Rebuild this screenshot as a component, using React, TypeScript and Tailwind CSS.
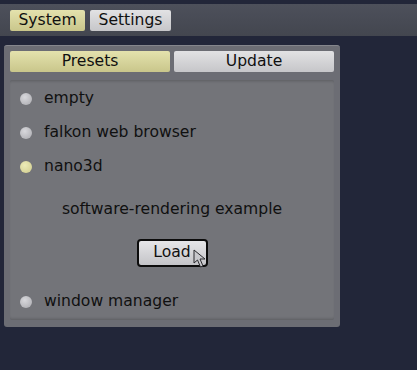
const font = "font-['DejaVu_Sans',sans-serif]";

const presets = ["empty", "falkon web browser", "nano3d"];

function Dot({ on }: { on?: boolean }) {
  return (
    <span
      className={`h-[12px] w-[12px] shrink-0 rounded-full ${
        on
          ? "bg-[radial-gradient(circle_at_40%_35%,#ecebb8,#cfcb8c)]"
          : "bg-[radial-gradient(circle_at_40%_35%,#d8d8dc,#a9a9ae)]"
      }`}
    />
  );
}

function Row({ label, on }: { label: string; on?: boolean }) {
  return (
    <div className="flex h-[34px] items-center gap-[12px] pl-[10px]">
      <Dot on={on} />
      <span className="text-[15.6px] leading-none text-[#101010]">{label}</span>
    </div>
  );
}

export default function App() {
  return (
    <div className={`h-[370px] w-[417px] bg-[#222639] pt-[4px] ${font}`}>
      {/* top bar */}
      <div className="flex h-[32px] gap-[5px] bg-gradient-to-b from-[#4d505b] to-[#43464f] px-[10px] pt-[6px]">
        <button className="h-[21px] w-[75px] rounded-[2px] bg-gradient-to-b from-[#e4e2ad] to-[#c9c68b] text-[15.6px] leading-none text-[#101010]">
          System
        </button>
        <button className="h-[21px] w-[81px] rounded-[2px] bg-gradient-to-b from-[#e2e2e4] to-[#c6c6c9] text-[15.6px] leading-none text-[#101010]">
          Settings
        </button>
      </div>

      {/* panel */}
      <div className="ml-[4px] mt-[9px] flex h-[282px] w-[336px] flex-col rounded-[3px] border-t border-[#85868c] bg-[#6c6d74] px-[6px] pt-[5px]">
        <div className="flex gap-[4px]">
          <button className="h-[21px] w-[160px] rounded-[2px] bg-gradient-to-b from-[#e4e2ad] to-[#c9c68b] text-[15.6px] leading-none text-[#101010]">
            Presets
          </button>
          <button className="h-[21px] w-[160px] rounded-[2px] bg-gradient-to-b from-[#e2e2e4] to-[#c6c6c9] text-[15.6px] leading-none text-[#101010]">
            Update
          </button>
        </div>

        <div className="relative mt-[8px] h-[240px] rounded-[2px] bg-[#737479] pt-[2px] shadow-[inset_0_3px_3px_-2px_rgba(0,0,0,0.2),inset_0_-3px_3px_-2px_rgba(0,0,0,0.2)]">
          {presets.map((p) => (
            <Row key={p} label={p} on={p === "nano3d"} />
          ))}
          <div className="mt-[16px] flex h-[20px] items-center justify-center text-[15.6px] text-[#101010]">
            software-rendering example
          </div>
          <div className="mt-[19px] flex justify-center">
            <button className="flex h-[28px] w-[71px] items-center justify-center rounded-[4px] border-2 border-[#0c0c0c] bg-gradient-to-b from-[#e6e6e8] to-[#c4c4c8] text-[15.6px] leading-none text-[#101010]">
              Load
            </button>
          </div>
          <div className="mt-[18px]">
            <Row label="window manager" />
          </div>

          {/* mouse cursor */}
          <svg
            className="absolute left-[183px] top-[169px]"
            width="16"
            height="20"
            viewBox="0 0 16 20"
          >
            <path
              d="M1 1 L1 14 L4.5 11 L7.5 18 L10 17 L7 10 L12 10 Z"
              fill="#c8c8cc"
              stroke="#2a2a2e"
              strokeWidth="1"
              strokeLinejoin="round"
            />
          </svg>
        </div>
      </div>
    </div>
  );
}
